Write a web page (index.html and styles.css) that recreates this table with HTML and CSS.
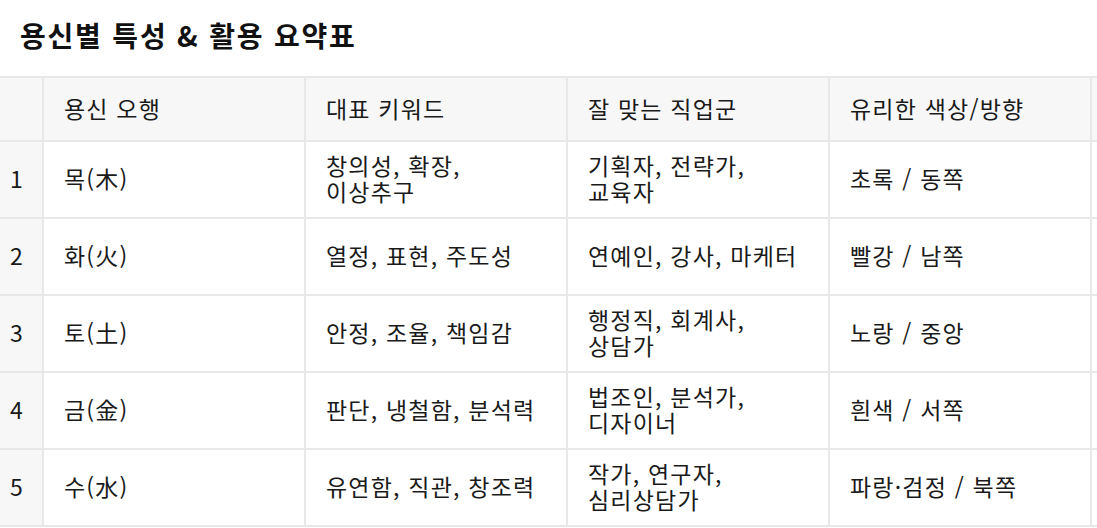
FILE: index.html
```html
<!DOCTYPE html>
<html lang="ko">
<head>
<meta charset="utf-8">
<link rel="stylesheet" href="styles.css">
</head>
<body>
<div class="page">
  <h2 class="title">용신별 특성 &amp; 활용 요약표</h2>
  <div class="table-wrap">
    <table class="summary">
      <colgroup>
        <col class="c-idx"><col class="c-main"><col class="c-main"><col class="c-main"><col class="c-main"><col class="c-extra">
      </colgroup>
      <thead>
        <tr><th class="idx"></th><th>용신 오행</th><th>대표 키워드</th><th>잘 맞는 직업군</th><th>유리한 색상/방향</th><th></th></tr>
      </thead>
      <tbody>
        <tr><td class="idx">1</td><td>목(木)</td><td>창의성, 확장,<br>이상추구</td><td>기획자, 전략가,<br>교육자</td><td>초록 / 동쪽</td><td></td></tr>
        <tr><td class="idx">2</td><td>화(火)</td><td>열정, 표현, 주도성</td><td>연예인, 강사, 마케터</td><td>빨강 / 남쪽</td><td></td></tr>
        <tr><td class="idx">3</td><td>토(土)</td><td>안정, 조율, 책임감</td><td>행정직, 회계사,<br>상담가</td><td>노랑 / 중앙</td><td></td></tr>
        <tr><td class="idx">4</td><td>금(金)</td><td>판단, 냉철함, 분석력</td><td>법조인, 분석가,<br>디자이너</td><td>흰색 / 서쪽</td><td></td></tr>
        <tr><td class="idx">5</td><td>수(水)</td><td>유연함, 직관, 창조력</td><td>작가, 연구자,<br>심리상담가</td><td>파랑·검정 / 북쪽</td><td></td></tr>
      </tbody>
    </table>
  </div>
</div>
</body>
</html>
```
FILE: styles.css
```css
html, body {
  margin: 0;
  padding: 0;
  background: #ffffff;
  overflow: hidden;
}
body {
  font-family: "Noto Sans CJK KR", "Noto Sans", sans-serif;
  color: #1a1a1a;
}
.page {
  width: 1097px;
  height: 528px;
  overflow: hidden;
}
.title {
  margin: 0;
  padding: 15px 0 0 20px;
  height: 76px;
  box-sizing: border-box;
  font-size: 28px;
  font-weight: 700;
  line-height: 40px;
  letter-spacing: 1.8px;
  color: #111;
}
.table-wrap {
  width: 1300px;
}
.summary {
  border-collapse: collapse;
  table-layout: fixed;
  width: 1300px;
  font-size: 23px;
  letter-spacing: 1.2px;
}
.c-idx { width: 43px; }
.c-main { width: 262px; }
.c-extra { width: 209px; }
.summary th, .summary td {
  border: 2px solid #e8e8e8;
  padding: 0 20px 3px;
  text-align: left;
  vertical-align: middle;
  font-weight: 400;
  line-height: 26px;
}
.summary tr > :first-child { border-left: none; }
.summary thead th {
  background: #f7f7f7;
  height: 59px;
}
.summary tbody td {
  height: 72px;
}
.summary .idx {
  background: #f7f7f7;
  padding: 0 0 3px 10px;
}
```
